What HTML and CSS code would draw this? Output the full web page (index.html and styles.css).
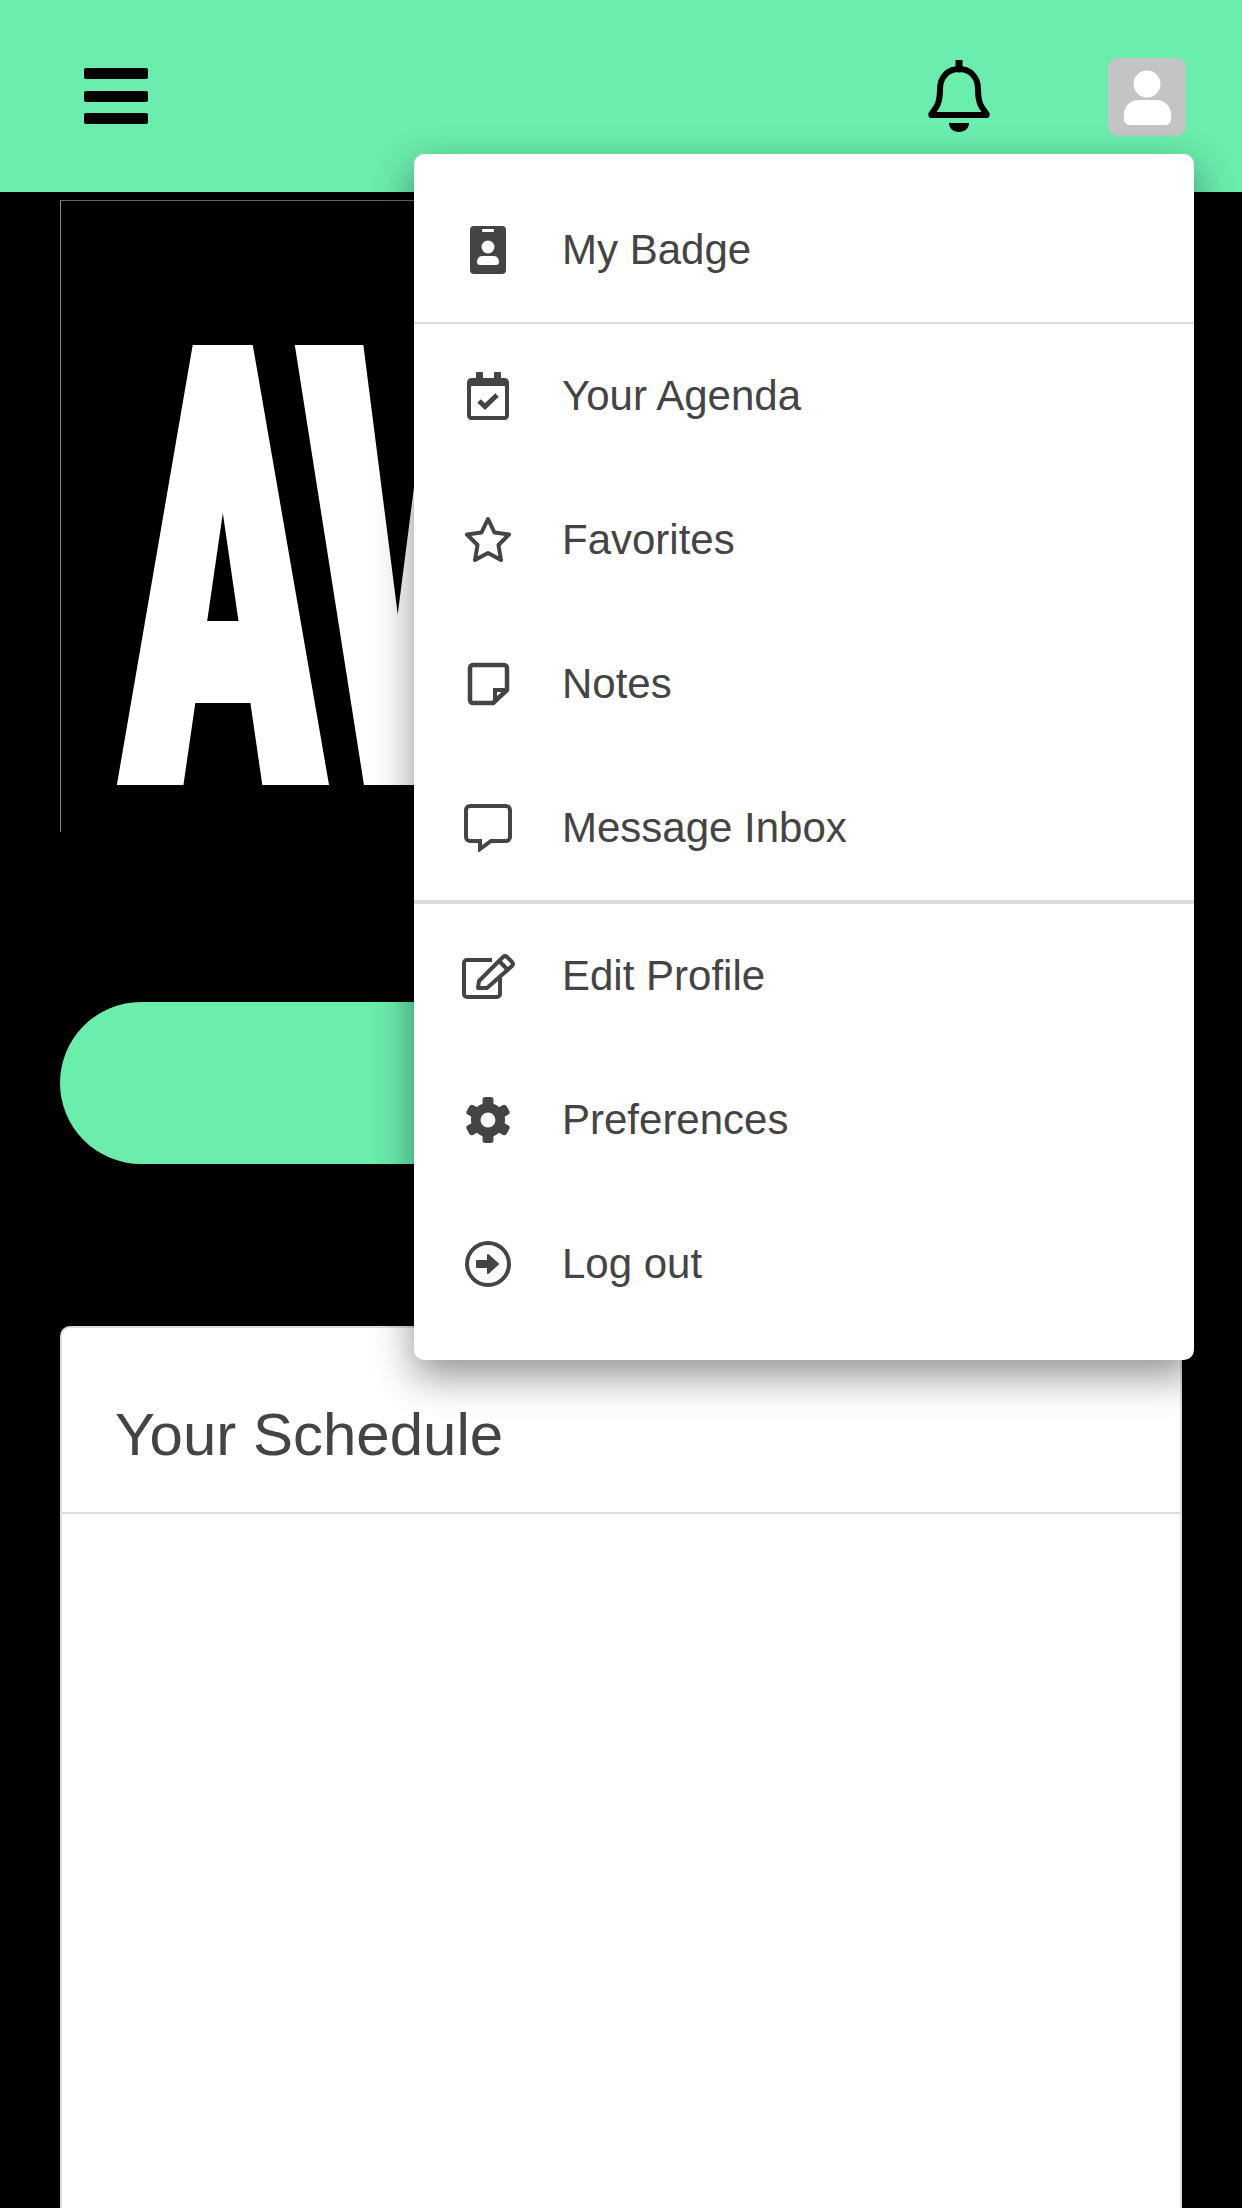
FILE: index.html
```html
<!DOCTYPE html>
<html lang="en">
<head>
<meta charset="UTF-8">
<meta name="viewport" content="width=device-width, initial-scale=1.0">
<title>Event Home</title>
<link rel="stylesheet" href="styles.css">
</head>
<body>

<header class="top-bar">
  <button class="menu-toggle" aria-label="Menu">
    <span></span><span></span><span></span>
  </button>
  <div class="top-actions">
    <svg class="bell" viewBox="0 0 62 72">
      <path d="M31 1v8" stroke="#000" stroke-width="7" stroke-linecap="round"/>
      <path d="M31 9c-11 0-19 8-19 20 0 15-4 19-8 24-1 1-1 2 0 2h54c1 0 1-1 0-2-4-5-8-9-8-24 0-12-8-20-19-20z" fill="none" stroke="#000" stroke-width="6" stroke-linejoin="round"/>
      <path d="M21 63h20c0 5-4 9-10 9s-10-4-10-9z" fill="#000"/>
    </svg>
    <div class="avatar">
      <svg viewBox="0 0 78 78">
        <circle cx="39" cy="26" r="13.5" fill="#fff"/>
        <path d="M30 42h18c8 0 15 6 15 14v5c0 4-3 6-6 6H22c-3 0-6-2-6-6v-5c0-8 7-14 14-14z" fill="#fff"/>
      </svg>
    </div>
  </div>
</header>

<main class="content">
  <div class="banner">
    <span class="banner-text">AV</span>
  </div>
  <a class="pill-button"></a>
  <section class="card">
    <h2 class="card-title">Your Schedule</h2>
  </section>
</main>

<!-- dropdown from the avatar -->
<nav class="user-menu">
  <a class="menu-item">
    <svg class="menu-icon" viewBox="0 0 56 48">
      <rect x="10" y="0" width="36" height="48" rx="4" fill="#444"/>
      <rect x="22" y="3" width="12" height="3" rx="1" fill="#fff"/>
      <circle cx="28" cy="21" r="6.5" fill="#fff"/>
      <path d="M22 30h12c3 0 5 3 5 6 0 2-1 3-3 3H20c-2 0-3-1-3-3 0-3 2-6 5-6z" fill="#fff"/>
    </svg>
    My Badge
  </a>
  <div class="menu-divider"></div>
  <a class="menu-item">
    <svg class="menu-icon" viewBox="0 0 56 48">
      <rect x="16" y="0" width="7" height="9" rx="1" fill="#444"/>
      <rect x="34" y="0" width="7" height="9" rx="1" fill="#444"/>
      <rect x="9" y="8" width="38" height="38" rx="2.5" fill="none" stroke="#444" stroke-width="4"/>
      <rect x="9" y="7" width="38" height="7" fill="#444"/>
      <path d="M19 29l6 5.5L37 23" fill="none" stroke="#444" stroke-width="5"/>
    </svg>
    Your Agenda
  </a>
  <a class="menu-item">
    <svg class="menu-icon" viewBox="0 0 56 48">
      <path d="M28 3l6.5 13.5L49 18.500 38.500 29 41 44 28 37 15 44l2.500-15L7 18.500l14.500-2z" fill="none" stroke="#444" stroke-width="4" stroke-linejoin="round"/>
    </svg>
    Favorites
  </a>
  <a class="menu-item">
    <svg class="menu-icon" viewBox="0 0 56 48">
      <path d="M13 5h31a3 3 0 0 1 3 3v22L33 43H13a3 3 0 0 1-3-3V8a3 3 0 0 1 3-3z" fill="none" stroke="#444" stroke-width="4.500" stroke-linejoin="round"/>
      <path d="M35 43V30h12" fill="none" stroke="#444" stroke-width="4"/>
    </svg>
    Notes
  </a>
  <a class="menu-item">
    <svg class="menu-icon" viewBox="0 0 56 48">
      <path d="M10 2h36a4 4 0 0 1 4 4v27a4 4 0 0 1-4 4H31l-11 8v-8H10a4 4 0 0 1-4-4V6a4 4 0 0 1 4-4z" fill="none" stroke="#444" stroke-width="4"/>
    </svg>
    Message Inbox
  </a>
  <div class="menu-divider thick"></div>
  <a class="menu-item">
    <svg class="menu-icon" viewBox="0 0 56 48">
      <path d="M32 8H7a3 3 0 0 0-3 3v31a3 3 0 0 0 3 3h30a3 3 0 0 0 3-3V26" fill="none" stroke="#444" stroke-width="4"/>
      <path d="M18 36l1-7L43 5a3 3 0 0 1 4 0l5 5a3 3 0 0 1 0 4L27 36z" fill="none" stroke="#444" stroke-width="4" stroke-linejoin="round"/>
      <path d="M39 9l8 8" stroke="#444" stroke-width="4"/>
    </svg>
    Edit Profile
  </a>
  <a class="menu-item">
    <svg class="menu-icon" viewBox="0 0 56 48">
      <circle cx="28" cy="24" r="17" fill="#444"/>
      <rect x="22.500" y="1" width="11" height="46" rx="3" fill="#444"/>
      <rect x="22.500" y="1" width="11" height="46" rx="3" fill="#444" transform="rotate(60 28 24)"/>
      <rect x="22.500" y="1" width="11" height="46" rx="3" fill="#444" transform="rotate(120 28 24)"/>
      <circle cx="28" cy="24" r="7.500" fill="#fff"/>
    </svg>
    Preferences
  </a>
  <a class="menu-item">
    <svg class="menu-icon" viewBox="0 0 56 48">
      <circle cx="28" cy="24" r="21" fill="none" stroke="#444" stroke-width="4"/>
      <path d="M17 21h11v-6l10 9-10 9v-6H17z" fill="#444" stroke="#444" stroke-width="2" stroke-linejoin="round"/>
    </svg>
    Log out
  </a>
</nav>

</body>
</html>
```

FILE: styles.css
```css
html, body {
  margin: 0;
  height: 2208px;
  overflow: hidden;
}
body {
  display: flex;
  flex-direction: column;
  position: relative;
  background-color: #000;
  font-family: "Liberation Sans", Arial, sans-serif;
  color: #444;
}

/* top bar */
.top-bar {
  display: flex;
  flex: none;
  justify-content: space-between;
  align-items: flex-start;
  height: 192px;
  padding: 58px 56px 0 84px;
  box-sizing: border-box;
  background-color: #6aedad;
}
.menu-toggle {
  display: flex;
  flex-direction: column;
  gap: 11.500px;
  width: 64px;
  margin-top: 10px;
  padding: 0;
  border: none;
  background: none;
}
.menu-toggle span {
  height: 11px;
  border-radius: 2px;
  background-color: #000;
}
.top-actions {
  display: flex;
  align-items: flex-start;
  gap: 118px;
}
.bell {
  width: 62px;
  height: 72px;
  margin-top: 2px;
}
.avatar {
  width: 78px;
  height: 78px;
  border-radius: 10px;
  background-color: #c4c4c4;
}
.avatar svg {
  display: block;
}

/* page content */
.content {
  display: flex;
  flex: 1;
  flex-direction: column;
  padding: 8px 60px 0;
  min-height: 0;
}
.banner {
  flex: none;
  height: 632px;
  border-top: 1px solid #666;
  border-left: 1px solid #888;
  box-sizing: border-box;
}
/* heavy condensed look: real text squeezed, thickened sideways with shadows */
.banner-text {
  display: block;
  margin: 63px 0 0 63px;
  font-family: Roboto, "Liberation Sans", sans-serif;
  font-size: 619px;
  font-weight: 900;
  line-height: 1;
  letter-spacing: -19px;
  color: #fff;
  text-shadow: -14px 0 #fff, -7px 0 #fff, 7px 0 #fff, 14px 0 #fff;
  transform: scaleX(0.469);
  transform-origin: left top;
}
.pill-button {
  display: block;
  flex: none;
  height: 162px;
  margin-top: 170px;
  border-radius: 81px;
  background-color: #6aedad;
}
.card {
  flex: 1;
  margin-top: 162px;
  border: 2px solid #ddd;
  border-bottom: none;
  border-radius: 10px 10px 0 0;
  background-color: #fff;
}
.card-title {
  margin: 0;
  padding: 77px 53px 47px;
  border-bottom: 2px solid #ddd;
  font-size: 60px;
  font-weight: normal;
  line-height: 60px;
}

/* dropdown menu */
.user-menu {
  position: absolute;
  top: 154px;
  left: 414px;
  width: 780px;
  padding: 24px 0;
  box-sizing: border-box;
  border-radius: 10px;
  background-color: #fff;
  box-shadow: 0 16px 40px rgba(0, 0, 0, 0.43);
}
.menu-item {
  display: flex;
  align-items: center;
  gap: 46px;
  height: 144px;
  padding-left: 46px;
  font-size: 42px;
}
.menu-icon {
  flex: none;
  width: 56px;
  height: 48px;
}
.menu-divider {
  height: 2px;
  background-color: #ddd;
}
.menu-divider.thick {
  height: 4px;
}
```
